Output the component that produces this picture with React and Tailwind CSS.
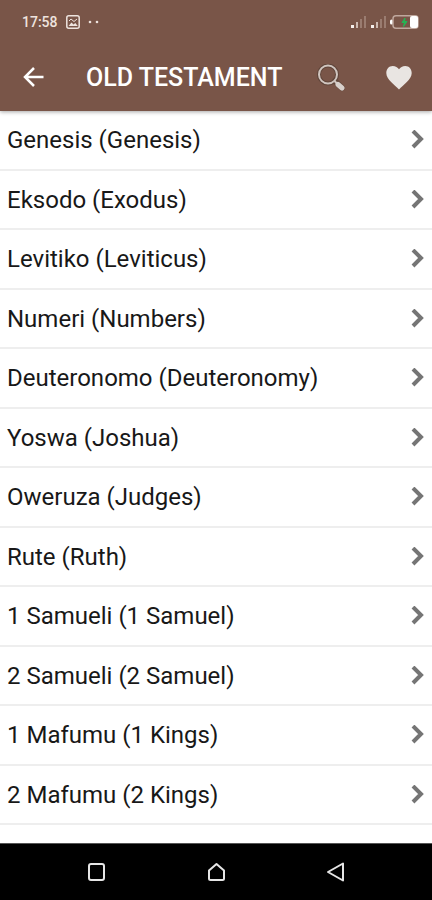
import React from 'react';

const books = [
  'Genesis (Genesis)',
  'Eksodo (Exodus)',
  'Levitiko (Leviticus)',
  'Numeri (Numbers)',
  'Deuteronomo (Deuteronomy)',
  'Yoswa (Joshua)',
  'Oweruza (Judges)',
  'Rute (Ruth)',
  '1 Samueli (1 Samuel)',
  '2 Samueli (2 Samuel)',
  '1 Mafumu (1 Kings)',
  '2 Mafumu (2 Kings)',
];

function Signal() {
  return (
    <svg width="17" height="14" viewBox="0 0 17 14" aria-hidden="true">
      <rect x="1" y="10" width="3" height="3" fill="#f6efec" />
      <rect x="6" y="7" width="2" height="6" fill="#cdbab1" />
      <rect x="10" y="4" width="2" height="9" fill="#9a7c70" />
      <rect x="14" y="1" width="2" height="12" fill="#9a7c70" />
    </svg>
  );
}

function StatusBar() {
  return (
    <div className="flex h-11 items-center justify-between pl-[22px] pr-3 text-[#eee3de]">
      <div className="flex items-center">
        <span className="text-[14px] font-medium leading-5">17:58</span>
        <svg className="ml-2" width="14" height="14" viewBox="0 0 14 14" fill="none" stroke="currentColor" strokeWidth="1.5" aria-hidden="true">
          <rect x="0.8" y="0.8" width="12.4" height="12.4" rx="2" />
          <path d="M2.5 11l3-3.5 2 2 1.8-1.5 2.500 3z" fill="currentColor" stroke="none" />
          <path d="M3 6l2-2 3 2.500L11 4" strokeWidth="1" />
        </svg>
        <svg className="ml-2" width="12" height="4" viewBox="0 0 12 4" fill="currentColor" aria-hidden="true">
          <circle cx="2" cy="2" r="1.3" />
          <circle cx="9" cy="2" r="1.3" />
        </svg>
      </div>
      <div className="flex items-center gap-[3px]">
        <Signal />
        <Signal />
        <svg width="30" height="14" viewBox="0 0 30 14" aria-hidden="true">
          <rect x="0" y="4.500" width="3" height="5" rx="1.500" fill="#fff" />
          <rect x="3" y="0.8" width="25" height="12.4" rx="3" fill="none" stroke="#bfa79d" strokeWidth="1.5" />
          <rect x="20" y="1" width="8" height="12" rx="2" fill="#fff" />
          <path d="M15 3l-3 4.500h2.500l-1 4 3.500-5h-2.500z" fill="#25b454" stroke="#25b454" />
        </svg>
      </div>
    </div>
  );
}

function Toolbar() {
  return (
    <div className="flex h-[67px] items-center pl-[22px] pr-[19px]">
      <button type="button" aria-label="Back" className="flex size-6 items-center justify-center">
        <svg width="24" height="24" viewBox="0 0 24 24" fill="none" stroke="#fff" strokeWidth="2.5" aria-hidden="true">
          <path d="M21.500 11H3.500M12 2L3 11l9 9" />
        </svg>
      </button>
      <h1 className="ml-10 flex-1 whitespace-nowrap text-[25px] font-medium leading-8 text-white">
        OLD TESTAMENT
      </h1>
      <button type="button" aria-label="Search" className="mr-10 flex size-7 items-center justify-center">
        <svg width="28" height="28" viewBox="0 0 28 28" fill="none" aria-hidden="true">
          <circle cx="11" cy="10.500" r="9" stroke="#60463b" strokeWidth="4" />
          <path d="M18 17l7 7" stroke="#60463b" strokeWidth="6" strokeLinecap="round" />
          <circle cx="11" cy="10.500" r="9" stroke="#d0c5bf" strokeWidth="2" />
          <path d="M17.500 17l3 3" stroke="#d0c5bf" strokeWidth="2" />
          <path d="M21 20.500l4 3.500" stroke="#d8d0cb" strokeWidth="5" strokeLinecap="round" />
        </svg>
      </button>
      <button type="button" aria-label="Favourites" className="flex size-7 items-center justify-center">
        <svg width="28" height="28" viewBox="0 0 28 28" fill="#e9e5e2" aria-hidden="true">
          <path d="M14 25.500C10 21 1.300 15.500 1.300 9 1.300 4.800 4 2 7.700 2c2.800 0 5 1.300 6.300 3.200C15.300 3.300 17.500 2 20.300 2c3.700 0 6.400 2.800 6.400 7C26.700 15.500 18 21 14 25.500z" />
        </svg>
      </button>
    </div>
  );
}

function BookRow({ name }) {
  return (
    <li className="flex min-h-12 flex-1 border-b-2 border-[#eeeeee]">
      <a href="#" className="flex flex-1 items-center justify-between pl-[7px] pr-2 pt-px">
        <span className="text-[24px] leading-8 text-[#181818]">{name}</span>
        <svg width="14" height="20" viewBox="0 0 14 20" fill="none" stroke="#757575" strokeWidth="4" aria-hidden="true">
          <path d="M3 1l8 8-8 8" />
        </svg>
      </a>
    </li>
  );
}

function NavBar() {
  return (
    <nav className="flex h-[57px] items-center justify-between border-t border-[#555] bg-black pl-[86px] pr-[86px]">
      <button type="button" aria-label="Recent apps">
        <svg width="20" height="20" viewBox="0 0 20 20" fill="none" stroke="#e6e6e6" strokeWidth="2" aria-hidden="true">
          <rect x="3" y="2" width="15" height="16" rx="2" />
        </svg>
      </button>
      <button type="button" aria-label="Home">
        <svg width="20" height="20" viewBox="0 0 20 20" fill="none" stroke="#e6e6e6" strokeWidth="2" strokeLinejoin="round" aria-hidden="true">
          <path d="M10.500 2L3 8.500V16.500a1.500 1.500 0 0 0 1.500 1.500h12a1.500 1.500 0 0 0 1.500-1.500V8.500z" />
        </svg>
      </button>
      <button type="button" aria-label="Back to previous screen">
        <svg width="20" height="20" viewBox="0 0 20 20" fill="none" stroke="#e6e6e6" strokeWidth="2" strokeLinejoin="round" aria-hidden="true">
          <path d="M17 1.500v17L2 10z" />
        </svg>
      </button>
    </nav>
  );
}

export default function App() {
  return (
    <div className="flex min-h-screen flex-col bg-white font-[Roboto,sans-serif]">
      <header className="bg-[#795548] shadow-[0_1px_4px_rgba(0,0,0,0.35)]">
        <StatusBar />
        <Toolbar />
      </header>
      <main className="flex flex-1 flex-col pb-[18px]">
        <ul className="flex flex-1 flex-col">
          {books.map((name) => (
            <BookRow key={name} name={name} />
          ))}
        </ul>
      </main>
      <NavBar />
    </div>
  );
}
